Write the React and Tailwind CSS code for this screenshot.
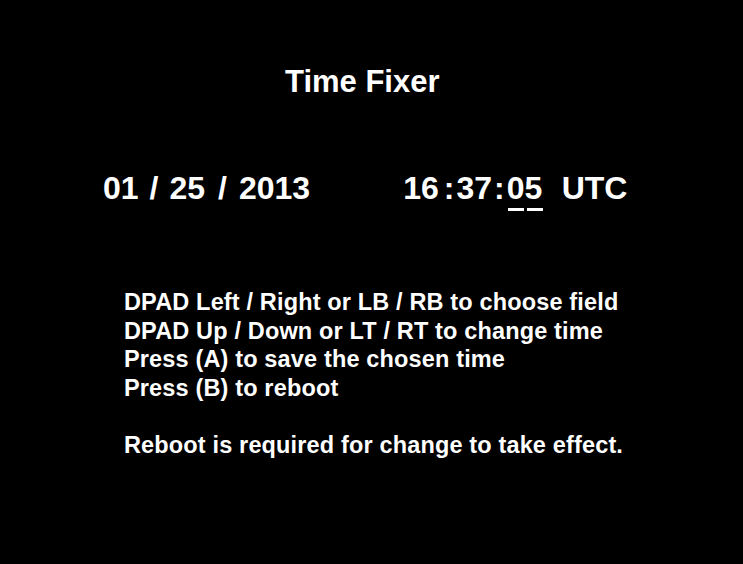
export default function App() {
  const font = { fontFamily: '"Liberation Sans", Arial, sans-serif' };
  return (
    <div
      className="w-[743px] h-[564px] bg-black text-white font-bold flex flex-col overflow-hidden"
      style={font}
    >
      <div className="pt-[66px] pl-[285px] text-[31px] leading-[31px] whitespace-nowrap">
        Time Fixer
      </div>

      <div className="mt-[75px] flex items-start text-[32px] leading-[32px] whitespace-nowrap">
        <span className="ml-[103px]">01</span>
        <span className="ml-[11px]">/</span>
        <span className="ml-[11px]">25</span>
        <span className="ml-[13px]">/</span>
        <span className="ml-[12px]">2013</span>
        <span className="ml-[93px]">16</span>
        <span className="ml-[5px]">:</span>
        <span className="ml-[2px]">37</span>
        <span className="ml-[2px]">:</span>
        <span className="ml-[2px] flex flex-col">
          <span>05</span>
          <span className="mt-[4px] flex gap-[3px] pl-[1px]">
            <span className="w-[16px] h-[3px] bg-white"></span>
            <span className="w-[16px] h-[3px] bg-white"></span>
          </span>
        </span>
        <span className="ml-[19px]">UTC</span>
      </div>

      <div className="mt-[77px] pl-[124px] text-[23.5px] leading-[28.5px] tracking-[0.15px] whitespace-nowrap">
        <div>DPAD Left / Right or LB / RB to choose field</div>
        <div>DPAD Up / Down or LT / RT to change time</div>
        <div>Press (A) to save the chosen time</div>
        <div>Press (B) to reboot</div>
        <div className="h-[28.5px]"></div>
        <div>Reboot is required for change to take effect.</div>
      </div>
    </div>
  );
}
